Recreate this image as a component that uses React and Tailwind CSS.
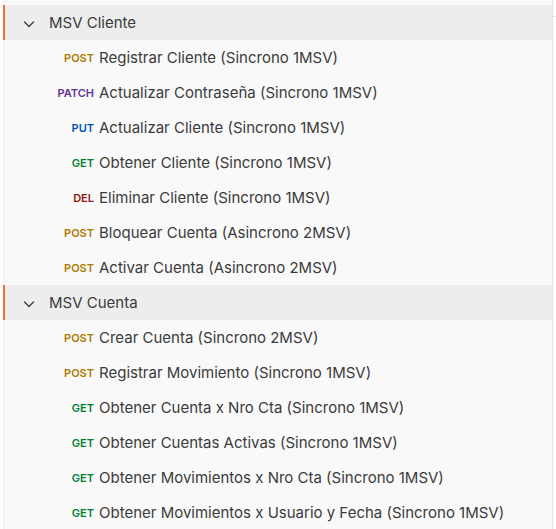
const METHOD_COLORS = {
  POST: 'text-[#ad7a03]',
  PATCH: 'text-[#623497]',
  PUT: 'text-[#0053b8]',
  GET: 'text-[#007f31]',
  DEL: 'text-[#8e1a10]',
};

const FOLDERS = [
  {
    name: 'MSV Cliente',
    items: [
      ['POST', 'Registrar Cliente (Sincrono 1MSV)'],
      ['PATCH', 'Actualizar Contraseña (Sincrono 1MSV)'],
      ['PUT', 'Actualizar Cliente (Sincrono 1MSV)'],
      ['GET', 'Obtener Cliente (Sincrono 1MSV)'],
      ['DEL', 'Eliminar Cliente (Sincrono 1MSV)'],
      ['POST', 'Bloquear Cuenta (Asincrono 2MSV)'],
      ['POST', 'Activar Cuenta (Asincrono 2MSV)'],
    ],
  },
  {
    name: 'MSV Cuenta',
    items: [
      ['POST', 'Crear Cuenta (Sincrono 2MSV)'],
      ['POST', 'Registrar Movimiento (Sincrono 1MSV)'],
      ['GET', 'Obtener Cuenta x Nro Cta (Sincrono 1MSV)'],
      ['GET', 'Obtener Cuentas Activas (Sincrono 1MSV)'],
      ['GET', 'Obtener Movimientos x Nro Cta (Sincrono 1MSV)'],
      ['GET', 'Obtener Movimientos x Usuario y Fecha (Sincrono 1MSV)'],
    ],
  },
];

function Chevron() {
  return (
    <svg width="12" height="12" viewBox="0 0 12 12" fill="none" className="text-[#3b3b3b]">
      <path d="M1.5 4 6 8.5 10.5 4" stroke="currentColor" strokeWidth="1.3" strokeLinecap="round" strokeLinejoin="round" />
    </svg>
  );
}

function RequestRow({ method, name }) {
  return (
    <div className="flex items-center h-[35px] pt-[2px]">
      <span className={`w-[90px] text-right text-[11px] font-semibold ${METHOD_COLORS[method]}`}>{method}</span>
      <span className="ml-[5px] text-[15px] text-[#3b3b3b] whitespace-nowrap">{name}</span>
    </div>
  );
}

export default function App() {
  return (
    <div className="w-[556px] h-[529px] bg-white flex overflow-hidden" style={{ fontFamily: 'Inter, "Noto Sans", sans-serif' }}>
      <div className="ml-[3px] w-[549px] h-full bg-[#f9f9f9] border-l border-[#ededed] pt-[5px]">
        {FOLDERS.map((f) => (
          <div key={f.name}>
            <div className="flex items-center h-[35px] pt-[2px] bg-[#ededed] border-l-2 border-[#ff6c37] -ml-px">
              <span className="ml-[18px]"><Chevron /></span>
              <span className="ml-[14px] text-[15px] text-[#3b3b3b]">{f.name}</span>
            </div>
            {f.items.map(([m, n], i) => (
              <RequestRow key={i} method={m} name={n} />
            ))}
          </div>
        ))}
      </div>
      <div className="flex-1 bg-white border-l border-[#e6e6e6]">
        <div className="mt-[16px] border-t border-[#e6e6e6]" />
      </div>
    </div>
  );
}
